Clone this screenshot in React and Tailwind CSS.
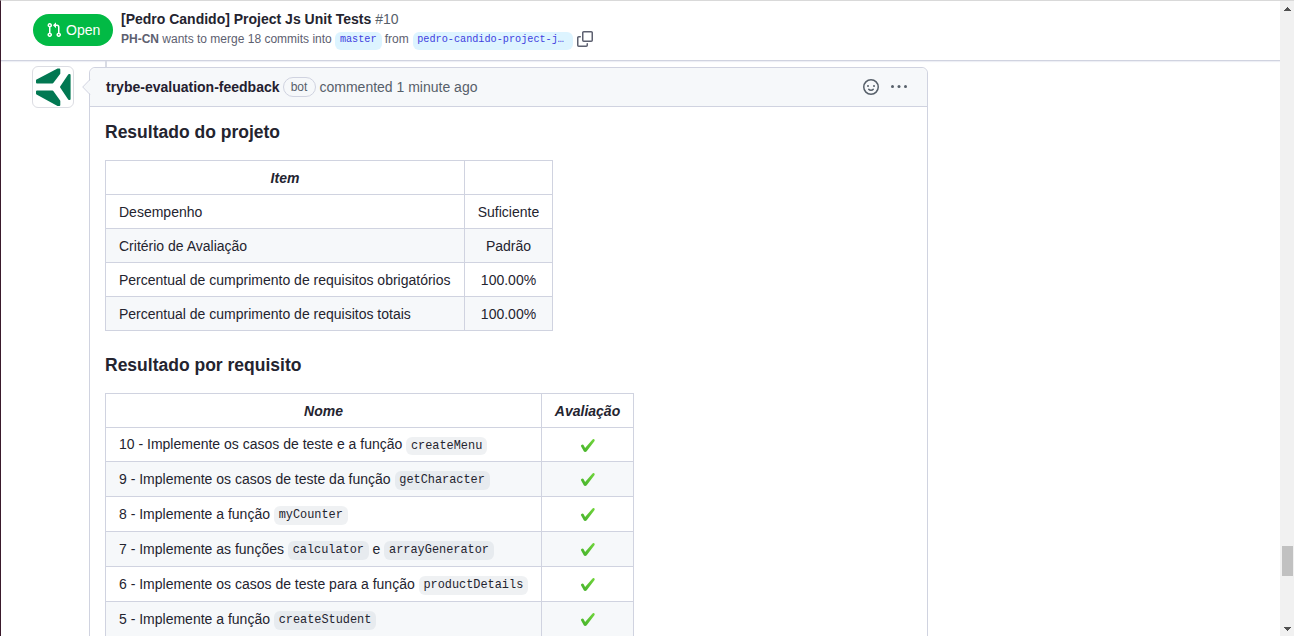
import React from "react";

const PullRequestIcon = () => (
  <svg width="16" height="16" viewBox="0 0 16 16" fill="currentColor" className="shrink-0">
    <path
      fillRule="evenodd"
      d="M7.177 3.073L9.573.677A.25.25 0 0110 .854v4.792a.25.25 0 01-.427.177L7.177 3.427a.25.25 0 010-.354zM3.75 2.5a.75.75 0 100 1.5.75.75 0 000-1.5zm-2.25.75a2.25 2.25 0 113 2.122v5.256a2.251 2.251 0 11-1.5 0V5.372A2.25 2.25 0 011.5 3.25zM11 2.5h-1V4h1a1 1 0 011 1v5.628a2.251 2.251 0 101.5 0V5A2.5 2.5 0 0011 2.5zm1 10.25a.75.75 0 111.5 0 .75.75 0 01-1.5 0zM3.75 12a.75.75 0 100 1.5.75.75 0 000-1.5z"
    />
  </svg>
);

const CopyIcon = () => (
  <svg width="16" height="16" viewBox="0 0 16 16" fill="currentColor" className="shrink-0">
    <path d="M0 6.75C0 5.784.784 5 1.75 5h1.5a.75.75 0 010 1.5h-1.5a.25.25 0 00-.25.25v7.5c0 .138.112.25.25.25h7.5a.25.25 0 00.25-.25v-1.5a.75.75 0 011.5 0v1.5A1.75 1.75 0 019.25 16h-7.5A1.75 1.75 0 010 14.25v-7.5z" />
    <path
      fillRule="evenodd"
      d="M5 1.75C5 .784 5.784 0 6.75 0h7.5C15.216 0 16 .784 16 1.75v7.5A1.75 1.75 0 0114.25 11h-7.5A1.75 1.75 0 015 9.25v-7.5zm1.75-.25a.25.25 0 00-.25.25v7.5c0 .138.112.25.25.25h7.5a.25.25 0 00.25-.25v-7.5a.25.25 0 00-.25-.25h-7.5z"
    />
  </svg>
);

const SmileyIcon = () => (
  <svg width="16" height="16" viewBox="0 0 16 16" fill="none" stroke="currentColor" className="shrink-0">
    <circle cx="8" cy="8" r="7.25" strokeWidth="1.5" />
    <circle cx="5" cy="7" r="1" fill="currentColor" stroke="none" />
    <circle cx="11" cy="7" r="1" fill="currentColor" stroke="none" />
    <path d="M5.75 10.25C6.2 10.85 7 11.25 8 11.25s1.8-.4 2.25-1" strokeWidth="1.5" strokeLinecap="round" />
  </svg>
);

const KebabIcon = () => (
  <svg width="18" height="16" viewBox="0 0 18 16" fill="currentColor" className="shrink-0">
    <circle cx="2.5" cy="7.5" r="1.5" />
    <circle cx="9" cy="7.5" r="1.5" />
    <circle cx="15.5" cy="7.5" r="1.5" />
  </svg>
);

const TrybeLogo = () => (
  <svg width="40" height="40" viewBox="0 0 40 40" fill="#027852" stroke="#027852" strokeWidth="2" strokeLinejoin="round">
    <path d="M25 2.5h1.3v4L19.5 15.5H4v-2z" />
    <path d="M4 24.5h15.5l6.8 9.5v4H25L4 26.5z" />
    <path d="M36 8h.6v24H36l-8-12z" />
  </svg>
);

const Check = () => (
  <svg width="16" height="16" viewBox="0 0 16 16" className="block">
    <defs>
      <linearGradient id="tick" x1="1" y1="0" x2="0" y2="1">
        <stop offset="0" stopColor="#72d63c" />
        <stop offset="1" stopColor="#43b02a" />
      </linearGradient>
    </defs>
    <path
      fill="url(#tick)"
      d="M1.2 7.2c.8-.9 2-.9 2.5.1l1.4 2.8 7.2-8.3c.7-.8 1.4-.9 2.1-.3.5.5.4 1.2-.2 2L6.7 13.3c-.7.9-2.4 1-2.9-.1L1 8.300c-.2-.4-.1-.8.200-1.100z"
    />
  </svg>
);

const Code = ({ children }) => (
  <code className="rounded-md bg-[#afb8c133] px-[4.76px] py-[2.38px] font-['Liberation_Mono',monospace] text-[11.9px]">
    {children}
  </code>
);

const summary = [
  ["Desempenho", "Suficiente"],
  ["Critério de Avaliação", "Padrão"],
  ["Percentual de cumprimento de requisitos obrigatórios", "100.00%"],
  ["Percentual de cumprimento de requisitos totais", "100.00%"],
];

const requirements = [
  <>10 - Implemente os casos de teste e a função <Code>createMenu</Code></>,
  <>9 - Implemente os casos de teste da função <Code>getCharacter</Code></>,
  <>8 - Implemente a função <Code>myCounter</Code></>,
  <>7 - Implemente as funções <Code>calculator</Code> e <Code>arrayGenerator</Code></>,
  <>6 - Implemente os casos de teste para a função <Code>productDetails</Code></>,
  <>5 - Implemente a função <Code>createStudent</Code></>,
];

const cell = "border-r border-b border-[#d0d3e0] p-0";

export default function App() {
  return (
    <div className="flex h-[636px] w-[1294px] overflow-hidden border-t border-l border-t-[#d9d9d9] border-l-[#3a1a2c] bg-white font-['Liberation_Sans',Arial,sans-serif] text-sm text-[#24242f]">
      <div className="flex min-w-0 flex-1 flex-col">
        <header className="flex h-[60px] shrink-0 items-start border-b border-[#d0d3e0] pl-8 shadow-[0_1px_1px_#eeeff5]">
          <div className="mt-[13px] flex h-8 w-20 items-center gap-1 rounded-full bg-[#02ba45] pl-[13px] text-white">
            <PullRequestIcon />
            <span>Open</span>
          </div>
          <div className="ml-2 pt-[8px]">
            <h1 className="leading-[21px] whitespace-pre">
              <span className="font-bold">[Pedro Candido] Project Js Unit Tests</span>{" "}
              <span className="text-[#57606a]">#10</span>
            </h1>
            <div className="flex h-[18px] items-center text-xs leading-[18px] text-[#5d6070]">
              <span>
                <b>PH-CN</b> wants to merge 18 commits into
              </span>
              <span className="mt-[3px] ml-[3px] h-[18px] w-[47px] rounded-md bg-[#ddf4ff] text-center font-['Liberation_Mono',monospace] text-[10.2px] leading-[16px] text-[#4040e0]">
                master
              </span>
              <span className="ml-[3px]">from</span>
              <span className="mt-[3px] ml-1 h-[18px] w-40 rounded-md bg-[#ddf4ff] pl-[4.5px] font-['Liberation_Mono',monospace] text-[10.2px] leading-[16px] text-[#4040e0]">
                pedro-candido-project-j…
              </span>
              <span className="ml-1">
                <CopyIcon />
              </span>
            </div>
          </div>
        </header>

        <main className="flex min-h-0 flex-1 items-start pl-[31px]">
          <div className="mt-[5px] h-[42px] w-[42px] shrink-0 rounded-md border border-[#dcdde3]">
            <TrybeLogo />
          </div>
          <div className="ml-[15px] flex w-[839px] shrink-0 flex-col">
            <div className="ml-4 h-[6px] w-[2px] bg-[#d8dbe4]" />
            <article className="relative h-[700px] rounded-md border border-[#d0d3e0]">
              <svg width="9" height="16" viewBox="0 0 9 16" className="absolute top-[11px] -left-[8px]">
                <path d="M9 0 1 8l8 8z" fill="#f6f8fa" />
                <path d="M8 .5.7 8 8 15.500" fill="none" stroke="#d0d3e0" />
              </svg>
              <div className="flex h-[39px] items-center rounded-t-md border-b border-[#d0d3e0] bg-[#f6f8fa] pr-[19px] pl-4 text-[#57606a]">
                <span className="font-bold text-[#24202f]">trybe-evaluation-feedback</span>
                <span className="ml-[3px] flex h-5 w-[33px] items-center justify-center rounded-full border border-[#d0d3e0] text-xs">
                  bot
                </span>
                <span className="ml-1">commented 1 minute ago</span>
                <span className="ml-auto flex gap-[11px]">
                  <SmileyIcon />
                  <KebabIcon />
                </span>
              </div>

              <div className="px-[15px] pt-[14px]">
                <h2 className="h-[39px] text-[17.5px] leading-[22px] font-bold">Resultado do projeto</h2>
                <table className="w-[448px] table-fixed border-separate border-spacing-0 border-t border-l border-[#d0d3e0]">
                  <colgroup>
                    <col className="w-[359px]" />
                    <col className="w-[88px]" />
                  </colgroup>
                  <tbody>
                    <tr className="h-[34px]">
                      <th className={`${cell} font-bold italic`}>Item</th>
                      <th className={cell} />
                    </tr>
                    {summary.map(([name, value]) => (
                      <tr key={name} className="h-[34px] odd:bg-[#f6f8fa]">
                        <td className={`${cell} pl-[13px]`}>{name}</td>
                        <td className={`${cell} text-center`}>{value}</td>
                      </tr>
                    ))}
                  </tbody>
                </table>

                <h2 className="mt-[23px] h-[39px] text-[17.5px] leading-[22px] font-bold">Resultado por requisito</h2>
                <table className="w-[529px] table-fixed border-separate border-spacing-0 border-t border-l border-[#d0d3e0]">
                  <colgroup>
                    <col className="w-[436px]" />
                    <col className="w-[92px]" />
                  </colgroup>
                  <tbody>
                    <tr className="h-[34px]">
                      <th className={`${cell} font-bold italic`}>Nome</th>
                      <th className={`${cell} font-bold italic`}>Avaliação</th>
                    </tr>
                    {requirements.map((name, i) => (
                      <tr key={i} className={i === 0 ? "h-[34px]" : "h-[35px] odd:bg-[#f6f8fa]"}>
                        <td className={`${cell} pl-[13px]`}>{name}</td>
                        <td className={cell}>
                          <div className="flex justify-center pt-[2px]">
                            <Check />
                          </div>
                        </td>
                      </tr>
                    ))}
                  </tbody>
                </table>
              </div>
            </article>
          </div>
        </main>
      </div>

      <div className="flex w-[14px] shrink-0 flex-col items-center bg-[#f1f1f1]">
        <svg width="7" height="4" viewBox="0 0 7 4" className="mt-[6px] shrink-0" shapeRendering="crispEdges">
          <path d="M3 0h1v1h1v1h1v1h1v1H0V3h1V2h1V1h1z" fill="#505050" />
        </svg>
        <div className="mt-[535px] h-[30px] w-[11px] shrink-0 bg-[#c1c1c1]" />
        <svg width="7" height="4" viewBox="0 0 7 4" className="mt-[51px] shrink-0" shapeRendering="crispEdges">
          <path d="M3 4h1V3h1V2h1V1h1V0H0v1h1v1h1v1h1z" fill="#505050" />
        </svg>
      </div>
    </div>
  );
}
